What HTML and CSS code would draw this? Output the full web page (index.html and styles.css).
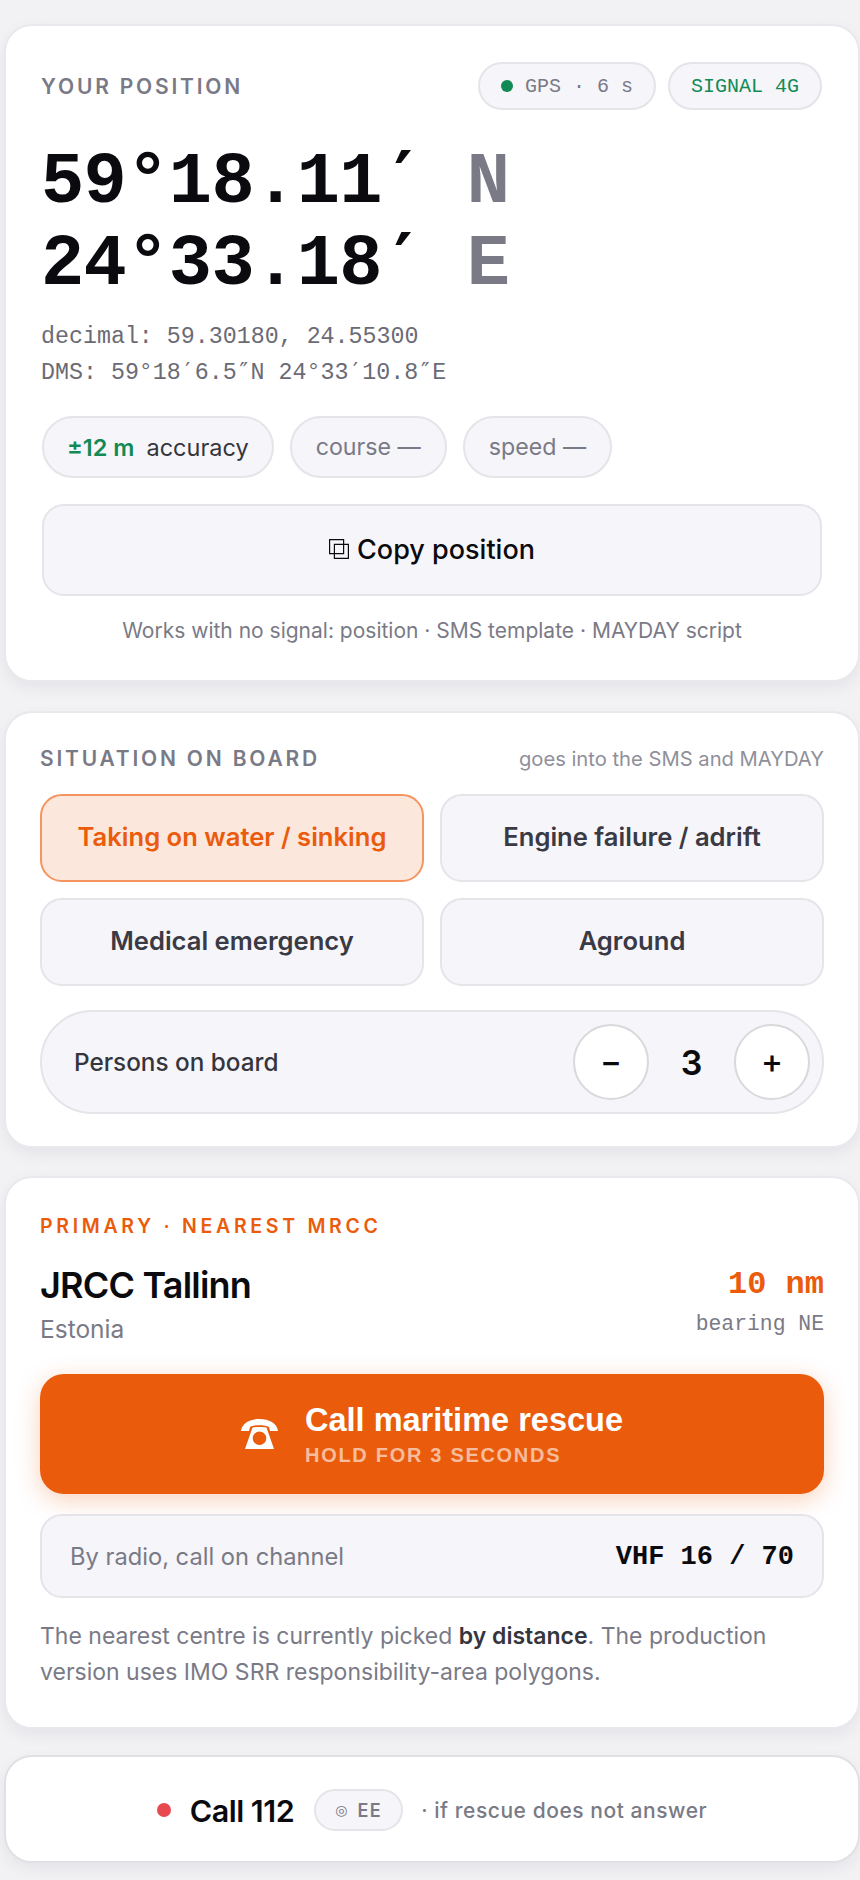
FILE: index.html
```html
<!DOCTYPE html>
<html lang="en">
<head>
<meta charset="utf-8">
<title>Position</title>
<link rel="stylesheet" href="styles.css">
</head>
<body>
<main class="page">
  <section class="card card-pos">
    <div class="pos-head">
      <span class="label label-pos">YOUR POSITION</span>
      <div class="chips">
        <span class="chip"><i class="dot dot-green"></i>GPS · 6 s</span>
        <span class="chip chip-green">SIGNAL 4G</span>
      </div>
    </div>
    <div class="coords">
      <div class="coord">59°18.11<span class="prime">′</span> <span class="hemi">N</span></div>
      <div class="coord">24°33.18<span class="prime">′</span> <span class="hemi">E</span></div>
    </div>
    <div class="alt">
      <div>decimal: 59.30180, 24.55300</div>
      <div>DMS: 59°18<span class="prime">′</span>6.5<span class="prime">″</span>N 24°33<span class="prime">′</span>10.8<span class="prime">″</span>E</div>
    </div>
    <div class="stats">
      <span class="stat stat-acc"><b class="stat-val">±12 m</b> accuracy</span>
      <span class="stat stat-muted">course —</span>
      <span class="stat stat-muted">speed —</span>
    </div>
    <button class="copy" type="button">
      <svg class="copy-icon" viewBox="0 0 20 20" width="20" height="20" aria-hidden="true"><path d="M.6.6h14v14H.6z M5.4 5.4h14v14h-14z" fill="none" stroke="#0b0b0f" stroke-width="1.2"/></svg>
      Copy position
    </button>
    <p class="note">Works with no signal: position · SMS template · MAYDAY script</p>
  </section>

  <section class="card card-sit">
    <div class="sit-head">
      <span class="label">SITUATION ON BOARD</span>
      <span class="hint">goes into the SMS and MAYDAY</span>
    </div>
    <div class="sit-grid">
      <button class="sit sit-on" type="button">Taking on water / sinking</button>
      <button class="sit" type="button">Engine failure / adrift</button>
      <button class="sit" type="button">Medical emergency</button>
      <button class="sit" type="button">Aground</button>
    </div>
    <div class="persons">
      <span class="persons-label">Persons on board</span>
      <div class="stepper">
        <button class="step" type="button">−</button>
        <span class="count">3</span>
        <button class="step" type="button">+</button>
      </div>
    </div>
  </section>

  <section class="card card-mrcc">
    <div class="label label-orange">PRIMARY · NEAREST MRCC</div>
    <div class="mrcc">
      <div>
        <div class="mrcc-name">JRCC Tallinn</div>
        <div class="mrcc-country">Estonia</div>
      </div>
      <div class="mrcc-dist">
        <div class="dist">10 nm</div>
        <div class="bearing">bearing NE</div>
      </div>
    </div>
    <button class="call" type="button">
      <svg class="call-icon" viewBox="0 0 37 30" width="37" height="30" aria-hidden="true"><path fill="#fff" d="M0 12C1 4 9 0 18.500 0S36 4 37 12H29L28 8C24 5.500 13 5.500 9 8L8 12Z"/><path fill="#fff" fill-rule="evenodd" d="M11.500 8.500C14 7.700 23 7.700 25.500 8.500L33 30H4ZM18.500 12.500a6.800 6.800 0 1 0 0 13.600a6.800 6.800 0 1 0 0-13.600Z"/></svg>
      <span class="call-text">
        <span class="call-main">Call maritime rescue</span>
        <span class="call-sub">HOLD FOR 3 SECONDS</span>
      </span>
    </button>
    <div class="radio">
      <span>By radio, call on channel</span>
      <span class="vhf">VHF 16 / 70</span>
    </div>
    <p class="explain">The nearest centre is currently picked <b>by distance</b>. The production version uses IMO SRR responsibility-area polygons.</p>
  </section>

  <section class="card card-112">
    <i class="dot dot-red"></i>
    <span class="call112">Call 112</span>
    <span class="ee"><span class="ee-ring">◎</span>EE</span>
    <span class="answer">· if rescue does not answer</span>
  </section>
</main>
</body>
</html>
```

FILE: styles.css
```css
* { box-sizing: border-box; }
html, body { margin: 0; padding: 0; }
body {
  background: #f2f2f5;
  font-family: Inter, "Liberation Sans", sans-serif;
  color: #0b0b0f;
  height: 1880px;
  overflow: hidden;
}
button { font: inherit; color: inherit; cursor: pointer; }
.page {
  padding: 24px 0 0 4px;
  display: flex;
  flex-direction: column;
}
.card {
  background: #fff;
  border: 2px solid #e9e9ed;
  border-radius: 28px;
  box-shadow: 0 6px 16px rgba(20, 20, 30, 0.06);
}
.label {
  font-size: 21px;
  font-weight: 600;
  letter-spacing: 2.8px;
  color: #7a7a86;
}
.label-pos { margin-left: -1px; }
.label-orange { color: #ea5b0c; font-size: 19.500px; letter-spacing: 3.700px; line-height: 24px; }

.card-pos { margin-bottom: 29px; padding: 36px 36px 35px 36px; }
.pos-head { display: flex; justify-content: space-between; align-items: center; height: 48px; }
.chips { display: flex; gap: 12px; }
.chip {
  display: inline-flex;
  align-items: center;
  height: 48px;
  padding: 0 21px;
  border: 2px solid #e4e4e9;
  border-radius: 24px;
  background: #f5f5fa;
  font: 20px "Liberation Mono", monospace;
  color: #7a7a86;
  white-space: pre;
}
.chip-green { color: #128a55; }
.dot { display: inline-block; border-radius: 50%; flex: none; }
.dot-green { width: 12px; height: 12px; background: #128a55; margin-right: 12px; }
.dot-red { width: 14px; height: 14px; background: #e8494f; }
.coords { margin-top: 32px; margin-left: -1px; }
.coord {
  font: 700 72px/82px "Liberation Mono", monospace;
  letter-spacing: -0.600px;
  white-space: pre;
  color: #0b0b0f;
}
.prime { font-family: "DejaVu Sans Mono", monospace; font-size: 0.990em; line-height: 0; }
.hemi { color: #7a7a86; }
.alt {
  margin-top: 13px;
  margin-left: -1px;
  font: 23.300px/36px "Liberation Mono", monospace;
  color: #6b6b76;
}
.stats { display: flex; gap: 16px; margin-top: 25px; }
.stat {
  display: inline-flex;
  align-items: center;
  gap: 12px;
  height: 62px;
  padding: 0 24px;
  border: 2px solid #e4e4e9;
  border-radius: 31px;
  background: #f5f5fa;
  font-size: 23.200px;
  color: #35353d;
}
.stat-acc { padding: 0 23px; font-size: 23.500px; }
.stat-val { color: #128a55; font-weight: 600; }
.stat-muted { color: #7a7a86; }
.copy {
  display: flex;
  align-items: center;
  justify-content: center;
  gap: 8px;
  width: 100%;
  height: 92px;
  margin-top: 26px;
  padding-bottom: 3px;
  border: 2px solid #e4e4e9;
  border-radius: 22px;
  background: #f5f5fa;
  font-size: 27px;
  font-weight: 500;
}
.note { margin: 21px 0 0; text-align: center; font-size: 21px; color: #7a7a86; line-height: 28px; }

.card-sit { margin-bottom: 28px; padding: 32px 34px 32px 34px; }
.sit-head { display: flex; justify-content: space-between; align-items: center; height: 26px; }
.hint { font-size: 20.200px; color: #8f8f9a; }
.sit-grid { display: grid; grid-template-columns: 1fr 1fr; gap: 16px; margin-top: 23px; }
.sit {
  height: 88px;
  padding: 0 0 3px;
  border: 2px solid #e4e4e9;
  border-radius: 22px;
  background: #f5f5fa;
  font-size: 25.600px;
  font-weight: 600;
  color: #3a3a44;
}
.sit-on { background: #fce7dd; border-color: #f4955f; color: #ea5b0c; }
.persons {
  display: flex;
  align-items: center;
  justify-content: space-between;
  height: 104px;
  margin-top: 24px;
  padding: 0 12px 0 32px;
  border: 2px solid #e4e4e9;
  border-radius: 52px;
  background: #f5f5fa;
  font-size: 24.300px;
  font-weight: 500;
  color: #35353d;
}
.stepper { display: flex; align-items: center; }
.step {
  width: 76px;
  height: 76px;
  padding: 0 0 2px;
  border: 2px solid #d9d9dc;
  border-radius: 50%;
  background: #fff;
  font-size: 33px;
  font-weight: 500;
  color: #0b0b0f;
}
.count { width: 85px; text-align: center; font-size: 34px; font-weight: 600; color: #0b0b0f; }

.card-mrcc { margin-bottom: 26px; padding: 36px 34px 37px 34px; }
.mrcc { display: flex; justify-content: space-between; margin-top: 25px; }
.mrcc-name { font-size: 36px; font-weight: 600; line-height: 44px; letter-spacing: -0.800px; }
.mrcc-country { font-size: 24.500px; line-height: 30px; margin-top: 7px; color: #7a7a86; }
.mrcc-dist { text-align: right; }
.dist { font: 700 32px/44px "Liberation Mono", monospace; color: #ea5b0c; }
.bearing { font: 21.400px/30px "Liberation Mono", monospace; margin-top: 2px; color: #7a7a86; }
.call {
  display: flex;
  align-items: center;
  justify-content: center;
  gap: 27px;
  width: 100%;
  height: 120px;
  margin-top: 30px;
  border: 0;
  border-radius: 24px;
  background: #ea5b0c;
  color: #fff;
  box-shadow: 0 6px 24px rgba(234, 91, 12, 0.28);
}
.call-icon { flex: none; }
.call-text { display: flex; flex-direction: column; text-align: left; font-family: "Liberation Sans", sans-serif; }
.call-main { font-size: 32.500px; font-weight: 700; line-height: 38px; }
.call-sub { font-size: 20px; font-weight: 700; letter-spacing: 1.700px; color: rgba(255, 255, 255, 0.6); line-height: 24px; margin-top: 4px; }
.radio {
  display: flex;
  align-items: center;
  justify-content: space-between;
  height: 84px;
  margin-top: 20px;
  padding: 0 28px;
  border: 2px solid #e4e4e9;
  border-radius: 22px;
  background: #f5f5fa;
  font-size: 23.700px;
  color: #7a7a86;
}
.vhf { margin-top: 2px; font: 700 27px "Liberation Mono", monospace; color: #0b0b0f; }
.explain { margin: 20px 0 0; font-size: 23px; line-height: 36px; color: #7a7a86; }
.explain b { font-weight: 600; color: #35353d; }

.card-112 {
  display: flex;
  align-items: center;
  justify-content: center;
  height: 108px;
  padding-top: 2px;
  border-color: #e0e0e5;
}
.call112 { margin-left: 19px; font-size: 30.500px; font-weight: 600; letter-spacing: -0.500px; }
.ee {
  margin-left: 20px;
  width: 89px;
  height: 42px;
  display: inline-flex;
  align-items: center;
  justify-content: center;
  gap: 10px;
  border: 2px solid #e4e4e9;
  border-radius: 21px;
  background: #f5f5fa;
  font-size: 18px;
  font-weight: 600;
  letter-spacing: 1.500px;
  color: #7a7a86;
}
.ee-ring { font-size: 14px; font-weight: 400; letter-spacing: 0; font-family: "DejaVu Sans", sans-serif; }
.answer { margin-left: 18px; font-size: 21px; font-weight: 500; color: #7a7a86; letter-spacing: 0.550px; }
```
